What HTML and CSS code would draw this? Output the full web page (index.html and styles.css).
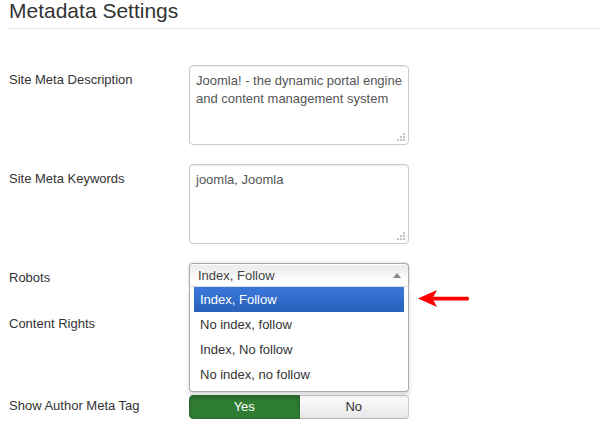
FILE: index.html
```html
<!DOCTYPE html>
<html>
<head>
<meta charset="utf-8">
<link rel="stylesheet" href="styles.css">
</head>
<body>
<div class="page">
  <h2 class="legend">Metadata Settings</h2>
  <div class="form">
    <div class="row">
      <label class="label">Site Meta Description</label>
      <div class="controls">
        <div class="ta-wrap">
          <textarea class="ta">Joomla! - the dynamic portal engine and content management system</textarea>
          <svg class="grip" width="8" height="8" viewBox="0 0 8 8"><rect x="6" y="0" width="2" height="2"/><rect x="3" y="3" width="2" height="2"/><rect x="6" y="3" width="2" height="2"/><rect x="0" y="6" width="2" height="2"/><rect x="3" y="6" width="2" height="2"/><rect x="6" y="6" width="2" height="2"/></svg>
        </div>
      </div>
    </div>
    <div class="row">
      <label class="label">Site Meta Keywords</label>
      <div class="controls">
        <div class="ta-wrap">
          <textarea class="ta">joomla, Joomla</textarea>
          <svg class="grip" width="8" height="8" viewBox="0 0 8 8"><rect x="6" y="0" width="2" height="2"/><rect x="3" y="3" width="2" height="2"/><rect x="6" y="3" width="2" height="2"/><rect x="0" y="6" width="2" height="2"/><rect x="3" y="6" width="2" height="2"/><rect x="6" y="6" width="2" height="2"/></svg>
        </div>
      </div>
    </div>
    <div class="row row-robots">
      <label class="label">Robots</label>
      <div class="controls">
        <div class="chosen">
          <div class="chosen-single"><span>Index, Follow</span><b class="caret"></b></div>
          <div class="chosen-drop">
            <ul class="results">
              <li class="result active">Index, Follow</li>
              <li class="result">No index, follow</li>
              <li class="result">Index, No follow</li>
              <li class="result">No index, no follow</li>
            </ul>
          </div>
          <svg class="pointer" width="52" height="19" viewBox="0 0 52 19"><polygon points="0,9.5 19,1 14.5,9.5 19,18" fill="#f00"/><rect x="14" y="7.8" width="37" height="3.6" rx="1.5" fill="#f00"/></svg>
        </div>
      </div>
    </div>
    <div class="row row-rights">
      <label class="label">Content Rights</label>
      <div class="controls">
        <div class="ta-wrap">
          <textarea class="ta ta-short"></textarea>
        </div>
      </div>
    </div>
    <div class="row row-author">
      <label class="label label-tight">Show Author Meta Tag</label>
      <div class="controls">
        <div class="btn-group">
          <span class="btn btn-yes">Yes</span>
          <span class="btn btn-no">No</span>
        </div>
      </div>
    </div>
  </div>
</div>
</body>
</html>
```

FILE: styles.css
```css
html, body {
  margin: 0;
  padding: 0;
  background: #fff;
}
body {
  font-family: "Liberation Sans", Arial, sans-serif;
  font-size: 13px;
  color: #333;
}
.page {
  padding-left: 9px;
  overflow: hidden;
}
.legend {
  margin: 0;
  font-size: 21px;
  font-weight: normal;
  line-height: 22px;
  color: #333;
  padding-bottom: 6px;
  border-bottom: 1px solid #e5e5e5;
}
.form {
  padding-top: 36px;
}
.row {
  display: flex;
  margin-bottom: 19px;
}
.row-robots {
  margin-bottom: 22px;
  position: relative;
  z-index: 5;
}
.label {
  width: 180px;
  flex: none;
  padding-top: 6px;
  line-height: 18px;
  color: #333;
}
.label-tight {
  padding-top: 2px;
}
.controls {
  width: 220px;
}
.ta-wrap {
  position: relative;
  width: 220px;
}
.ta {
  display: block;
  box-sizing: border-box;
  width: 220px;
  height: 80px;
  margin: 0;
  padding: 6px 6px 4px;
  border: 1px solid #ccc;
  border-radius: 4px;
  font-family: "Liberation Sans", Arial, sans-serif;
  font-size: 13px;
  line-height: 18px;
  color: #555;
  resize: none;
  overflow: hidden;
  box-shadow: inset 0 1px 1px rgba(0,0,0,0.075);
}
.ta-short {
  height: 67px;
}
.grip {
  position: absolute;
  right: 4px;
  bottom: 4px;
  fill: #c4c4c4;
}
.chosen {
  position: relative;
  width: 220px;
}
.chosen-single {
  box-sizing: border-box;
  height: 24px;
  padding-left: 8px;
  border: 1px solid #aaa;
  border-bottom-color: #ddd;
  border-radius: 4px 4px 0 0;
  background: linear-gradient(#eee 20%, #fff 80%);
  box-shadow: 0 0 3px rgba(0,0,0,0.2), inset 0 1px 0 #fff;
  line-height: 24px;
  color: #444;
  position: relative;
}
.caret {
  position: absolute;
  right: 7px;
  top: 9px;
  width: 0;
  height: 0;
  border-left: 4px solid transparent;
  border-right: 4px solid transparent;
  border-bottom: 5px solid #888;
}
.chosen-drop {
  position: absolute;
  top: 24px;
  left: 0;
  box-sizing: border-box;
  width: 220px;
  background: #fff;
  border: 1px solid #aaa;
  border-top: 0;
  border-radius: 0 0 4px 4px;
  box-shadow: 0 4px 5px rgba(0,0,0,0.15);
}
.results {
  list-style: none;
  margin: 0 4px 4px 0;
  padding: 0 0 0 4px;
}
.result {
  padding: 5px 6px;
  line-height: 15px;
  color: #333;
}
.result.active {
  background: linear-gradient(#3875d7 20%, #2a62bc 90%);
  color: #fff;
}
.pointer {
  position: absolute;
  left: 229px;
  top: 26px;
}
.btn-group {
  display: flex;
  width: 220px;
}
.btn {
  flex: 1;
  box-sizing: border-box;
  height: 24px;
  line-height: 22px;
  text-align: center;
  font-size: 13px;
  border: 1px solid #ccc;
}
.btn-yes {
  background: #2f7c33;
  border-color: #2a6e2e;
  color: #fff;
  border-radius: 4px 0 0 4px;
  box-shadow: inset 0 2px 4px rgba(0,0,0,0.15);
}
.btn-no {
  background: linear-gradient(#fff, #e6e6e6);
  border-left: 0;
  border-bottom-color: #b3b3b3;
  color: #333;
  border-radius: 0 4px 4px 0;
}
```
